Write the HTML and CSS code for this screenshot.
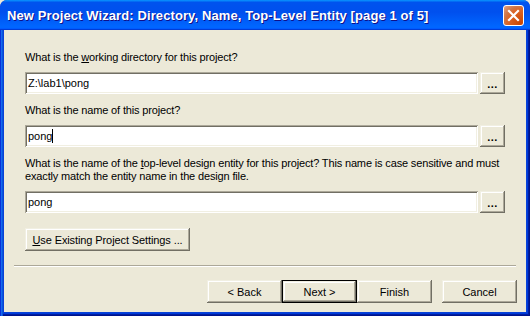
FILE: index.html
```html
<!DOCTYPE html>
<html lang="en">

<head>
    <meta charset="UTF-8">
    <title>New Project Wizard</title>
    <link rel="stylesheet" href="styles.css">
</head>

<body>
    <div class="window">
        <div class="titlebar">
            <span class="title">New Project Wizard: Directory, Name, Top-Level Entity [page 1 of 5]</span>
            <span class="close">
                <svg width="13" height="13" viewBox="0 0 13 13">
                    <path d="M2 2 L11 11 M11 2 L2 11" stroke="#fff" stroke-width="2.2" stroke-linecap="square"/>
                </svg>
            </span>
        </div>
        <div class="frame">
            <div class="content">
                <div class="form">
                    <div class="group">
                        <div class="label">What is the <u>w</u>orking directory for this project?</div>
                        <div class="row">
                            <div class="field">Z:\lab1\pong</div>
                            <button class="btn browse">...</button>
                        </div>
                    </div>
                    <div class="group">
                        <div class="label">What is the name of this project?</div>
                        <div class="row">
                            <div class="field">pong<span class="caret"></span></div>
                            <button class="btn browse">...</button>
                        </div>
                    </div>
                    <div class="group">
                        <div class="label">What is the name of the <u>t</u>op-level design entity for this project? This name is case sensitive and must<br>exactly match the entity name in the design file.</div>
                        <div class="row">
                            <div class="field">pong</div>
                            <button class="btn browse">...</button>
                        </div>
                    </div>
                    <button class="btn existing"><u>U</u>se Existing Project Settings ...</button>
                </div>
                <div class="sep"></div>
                <div class="footer">
                    <button class="btn nav">&lt; Back</button>
                    <button class="btn nav default">Next &gt;</button>
                    <button class="btn nav">Finish</button>
                    <button class="btn nav cancel">Cancel</button>
                </div>
            </div>
        </div>
    </div>
</body>

</html>
```

FILE: styles.css
```css
/* page reset */

html,
body {
    margin: 0;
    padding: 0;
    background: #ece9d8;
}

body {
    font-family: "Liberation Sans", Arial, sans-serif;
    font-size: 11px;
    color: #000;
}

/* window frame */

.window {
    width: 530px;
    height: 316px;
    display: flex;
    flex-direction: column;
    border-radius: 7px 7px 0 0;
    overflow: hidden;
    background: #0831d9;
}

.titlebar {
    height: 30px;
    flex: none;
    display: flex;
    align-items: center;
    padding: 0 6px 0 7px;
    box-sizing: border-box;
    background: linear-gradient(180deg, #0997ff, #0053ee 8%, #0050ee 40%, #0066ff 88%, #0066ff 93%, #005bff 95%, #003dd7 96%, #003dd7);
}

.title {
    color: #fff;
    font-weight: bold;
    font-size: 13px;
    letter-spacing: 0.1px;
    text-shadow: 1px 1px #0f1089;
    white-space: nowrap;
    margin-top: 1px;
}

.close {
    margin-left: auto;
    width: 21px;
    height: 21px;
    box-sizing: border-box;
    border: 1px solid #fff;
    border-radius: 3px;
    background: radial-gradient(circle at 90% 90%, #cc4600 0%, #dc6527 55%, #cd7546 70%, #e5a286 100%);
    display: flex;
    align-items: center;
    justify-content: center;
    margin-top: 1px;
}

.close svg {
    display: block;
}

.frame {
    flex: 1;
    display: flex;
    padding: 0 4px 4px;
    background: #0842d8;
    box-shadow: inset 1px 0 #0831d9, inset 2px 0 #166aee, inset 3px 0 #0855dd, inset -1px -1px #00138c, inset -2px -2px #001ea0, inset -3px -3px #003bda;
}

.content {
    flex: 1;
    display: flex;
    flex-direction: column;
    background: #ece9d8;
}

/* form area */

.form {
    display: flex;
    flex-direction: column;
    align-items: flex-start;
    gap: 10px;
    padding: 21px 21px 0;
}

.group {
    align-self: stretch;
    display: flex;
    flex-direction: column;
    gap: 8px;
}

.label {
    line-height: 13px;
    letter-spacing: -0.15px;
    white-space: nowrap;
}

.row {
    display: flex;
    gap: 2px;
    height: 22px;
}

.field {
    flex: 1;
    background: #fff;
    box-sizing: border-box;
    padding: 0 3px;
    line-height: 22px;
    box-shadow: inset 1px 1px #aca899, inset -1px -1px #fff, inset 2px 2px #716f64, inset -2px -2px #f1efe2;
    display: flex;
    align-items: center;
}

.caret {
    display: inline-block;
    width: 1px;
    height: 14px;
    background: #000;
}

/* classic buttons */

.btn {
    font-family: inherit;
    font-size: 11px;
    color: #000;
    background: #ece9d8;
    border: none;
    padding: 0;
    margin: 0;
    box-sizing: border-box;
    box-shadow: inset -1px -1px #716f64, inset 1px 1px #f1efe2, inset -2px -2px #aca899, inset 2px 2px #fff;
}

.browse {
    width: 25px;
    height: 22px;
    font-weight: bold;
    letter-spacing: 0.5px;
    padding-top: 2px;
}

.existing {
    width: 165px;
    height: 23px;
    margin-top: 5px;
    letter-spacing: -0.1px;
}

.sep {
    margin: 14px 10px 0;
    border-top: 1px solid #aca899;
    border-bottom: 1px solid #fff;
    height: 0;
}

.footer {
    display: flex;
    justify-content: flex-end;
    padding: 13px 9px 0;
}

.nav {
    width: 75px;
    height: 23px;
}

.default {
    border: 1px solid #000;
}

.cancel {
    margin-left: 10px;
}
```
